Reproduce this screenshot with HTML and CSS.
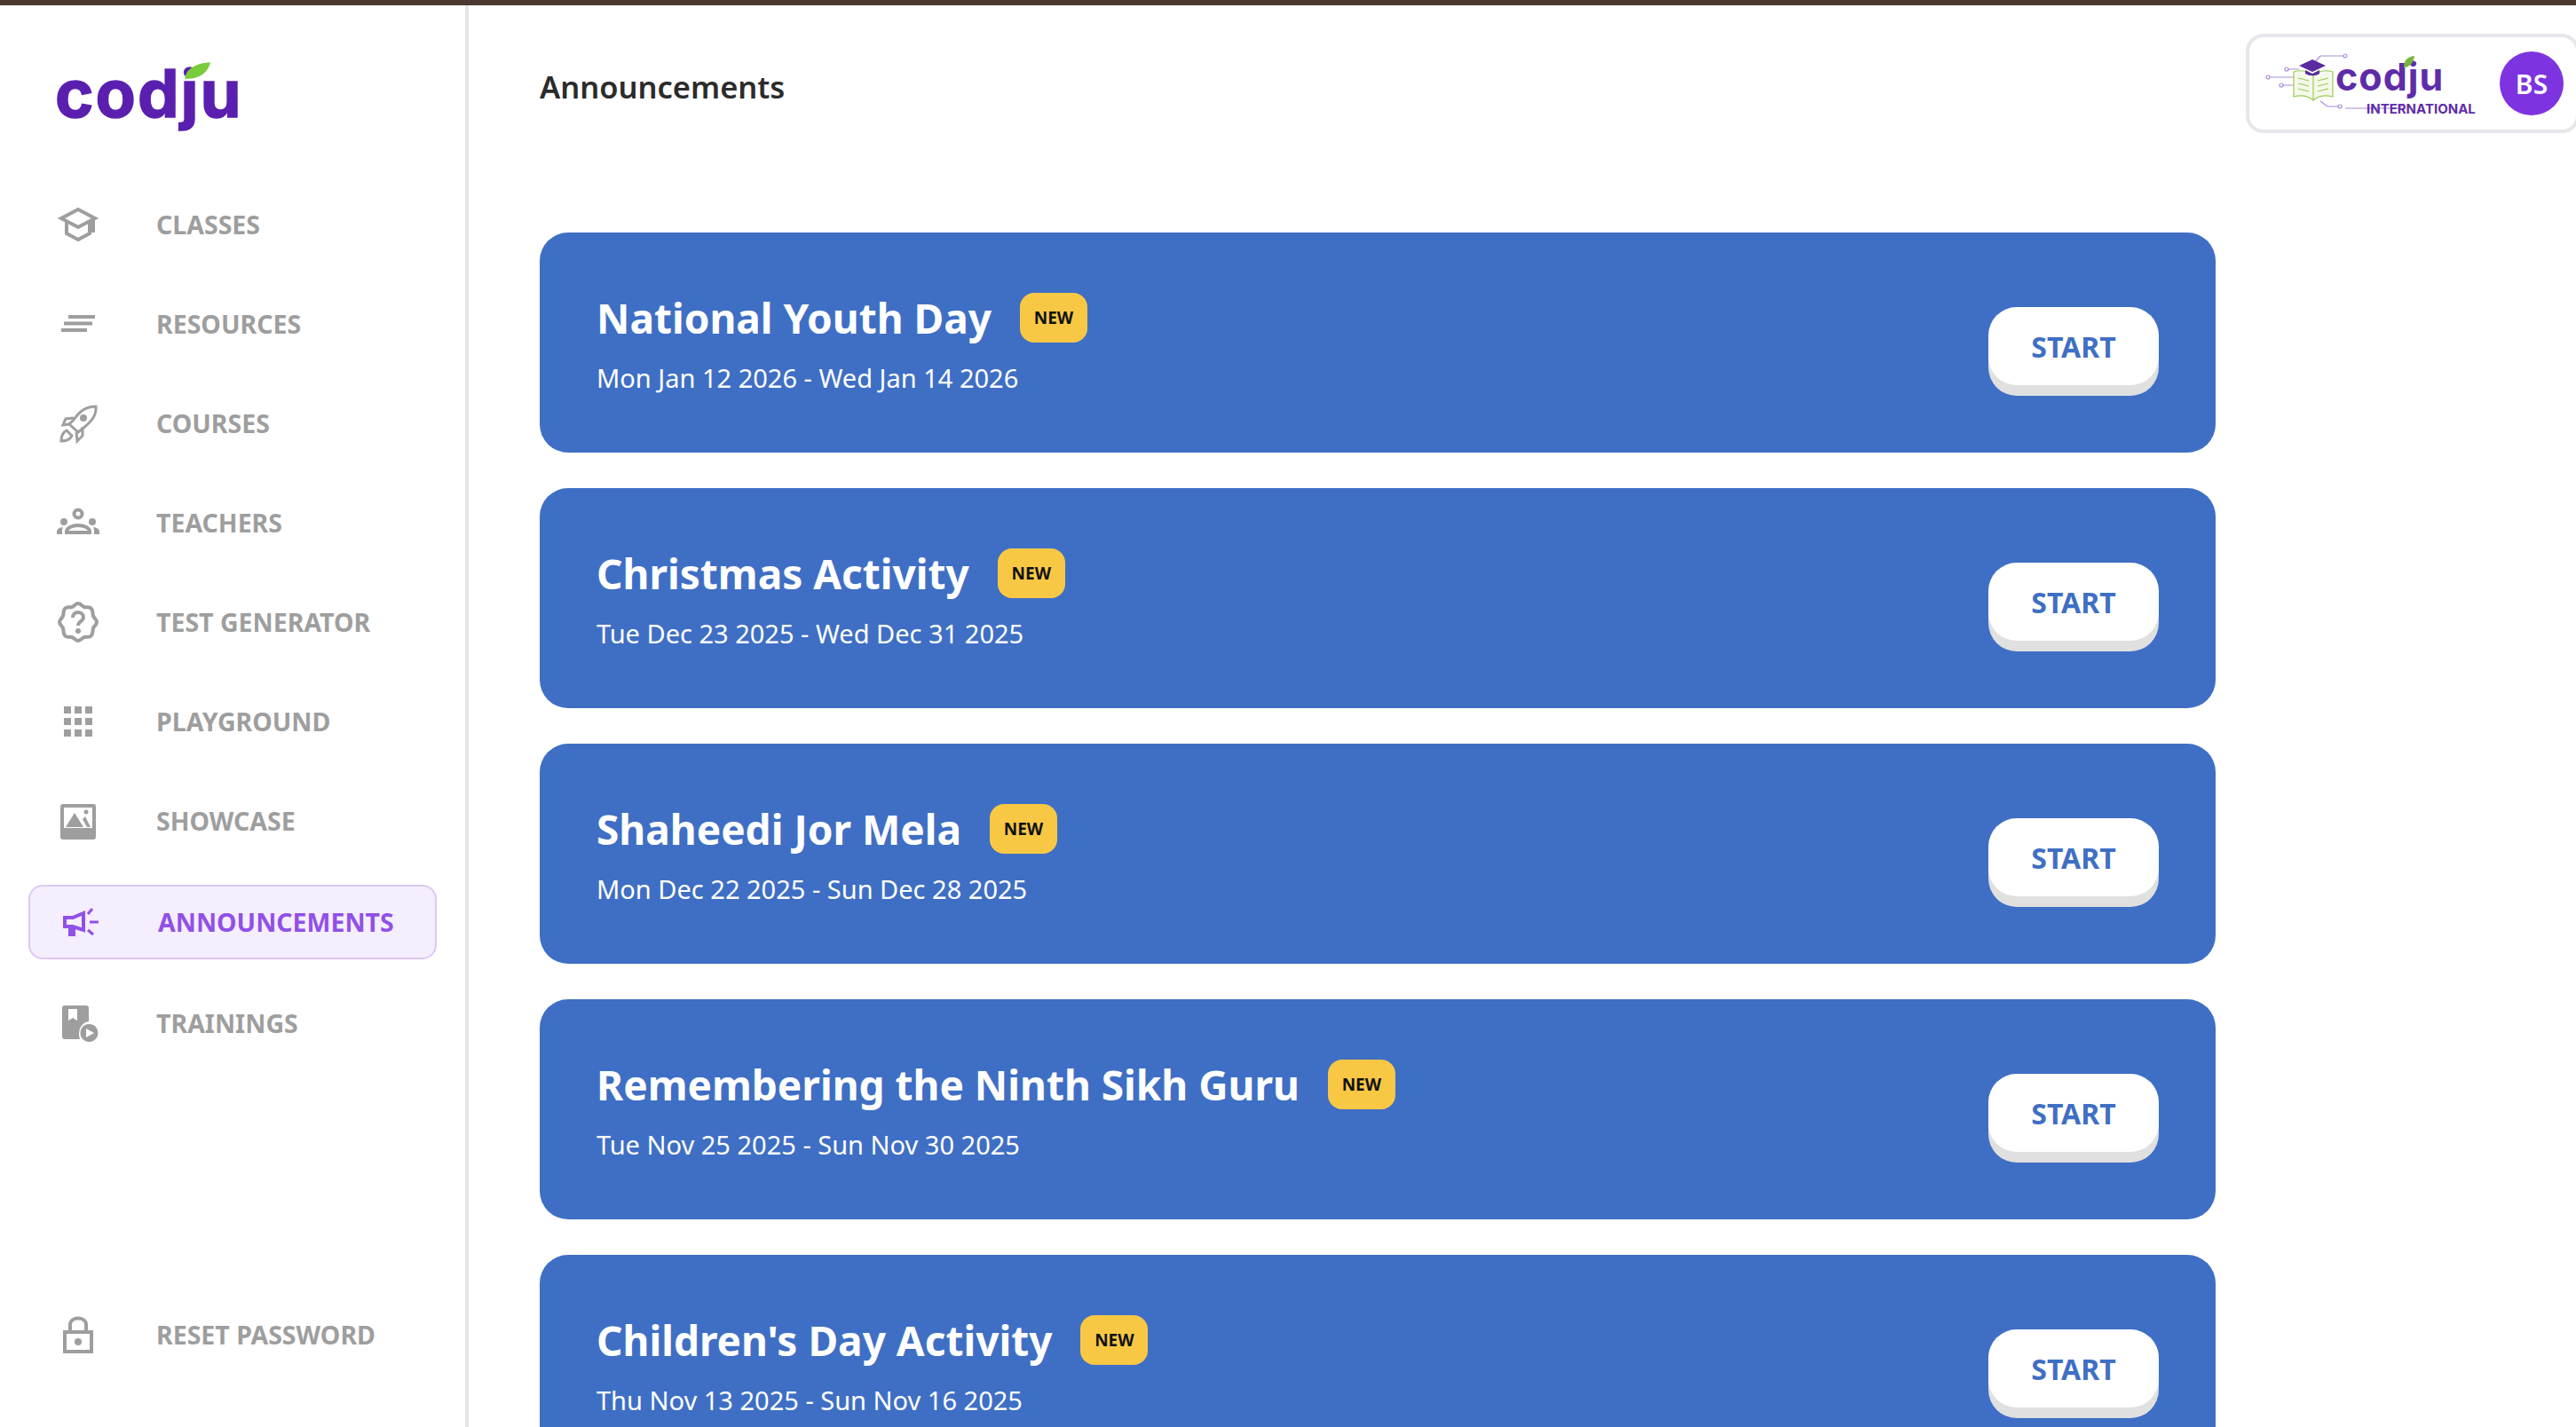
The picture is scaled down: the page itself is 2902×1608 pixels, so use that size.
FILE: index.html
```html
<!DOCTYPE html>
<html lang="en">
<head>
    <meta charset="UTF-8">
    <meta name="viewport" content="width=device-width, initial-scale=1.0">
    <title>Announcements</title>
    <link rel="stylesheet" href="styles.css">
</head>
<body>
    <div class="topbar"></div>
    <div class="layout">
        <aside class="sidebar">
            <div class="logo">
                <span class="logo-text">codju</span>
                <svg class="logo-leaf" viewBox="0 0 26 17"><path d="M1 16C2 8 9 1 26 0C24 9 16 17 1 16Z"/></svg>
            </div>
            <nav class="nav">
                <a class="nav-item">
                    <svg class="nav-icon" viewBox="0 0 48 48"><path class="line" d="M24 7L5 17L24 27L43 17L24 7Z M11 21V34L24 41L37 34V21"/><path class="line" d="M41 17V33"/></svg>
                    <span>CLASSES</span>
                </a>
                <a class="nav-item">
                    <svg class="nav-icon" viewBox="0 0 48 48"><path d="M13 14H43V18H13Z M8 21.500H40V25.500H8Z M5 29H34V33H5Z"/></svg>
                    <span>RESOURCES</span>
                </a>
                <a class="nav-item">
                    <svg class="nav-icon" viewBox="0 0 48 48"><path class="line thin" d="M44 5C33 5 26 10 19 20L14 25L24 34L29 30C39 22 45 15 44 5Z"/><circle cx="30" cy="18" r="4"/><path class="line thin" d="M19 18L10 19L7 26L14 25 M29 28L29 38L23 44L22 34 M11 32C7 34 5 39 5 44C10 44 15 42 17 38Z"/></svg>
                    <span>COURSES</span>
                </a>
                <a class="nav-item">
                    <svg class="nav-icon" viewBox="0 0 48 48"><circle class="line" cx="24" cy="14" r="4.500"/><circle cx="8" cy="23" r="4"/><circle cx="40" cy="23" r="4"/><path class="line" d="M11 37V34C11 30 17 27 24 27C31 27 37 30 37 34V35H11"/><path d="M0 37V34C0 31 3 29.500 7 29C6 31 6 33 6 37Z M48 37V34C48 31 45 29.500 41 29C42 31 42 33 42 37Z"/></svg>
                    <span>TEACHERS</span>
                </a>
                <a class="nav-item">
                    <svg class="nav-icon" viewBox="0 0 48 48"><path class="line" d="M24 3C27 3 28 6 31 7C34 8 37 6 39 9C41 11 40 14 41 17C42 20 45 21 45 24C45 27 42 28 41 31C40 34 41 37 39 39C37 42 34 40 31 41C28 42 27 45 24 45C21 45 20 42 17 41C14 40 11 42 9 39C7 37 8 34 7 31C6 28 3 27 3 24C3 21 6 20 7 17C8 14 7 11 9 9C11 6 14 8 17 7C20 6 21 3 24 3Z"/><path class="line" d="M18 19C18 15 21 13 24 13C28 13 30 16 30 19C30 23 24 23 24 28"/><circle cx="24" cy="34" r="3"/></svg>
                    <span>TEST GENERATOR</span>
                </a>
                <a class="nav-item">
                    <svg class="nav-icon" viewBox="0 0 48 48"><path d="M8 7H16V15H8Z M20 7H28V15H20Z M32 7H40V15H32Z M8 20H16V28H8Z M20 20H28V28H20Z M32 20H40V28H32Z M8 33H16V41H8Z M20 33H28V41H20Z M32 33H40V41H32Z"/></svg>
                    <span>PLAYGROUND</span>
                </a>
                <a class="nav-item">
                    <svg class="nav-icon" viewBox="0 0 48 48"><path fill-rule="evenodd" d="M7 5H41Q44 5 44 8V42Q44 45 41 45H7Q4 45 4 42V8Q4 5 7 5Z M8 9V32H40V9Z"/><path d="M10 31L20 15L30 31Z M29 22L32 19L38 31H34Z"/><circle cx="33" cy="14" r="2.500"/></svg>
                    <span>SHOWCASE</span>
                </a>
                <a class="nav-item active">
                    <svg class="nav-icon" viewBox="0 0 48 48"><path class="line" d="M28 14V33L16 29H7V19H16Z"/><path class="line" d="M13 29V38H17V30"/><path class="line thin" d="M33 15L38 9 M35 24H45 M33 33L39 38"/></svg>
                    <span>ANNOUNCEMENTS</span>
                </a>
                <a class="nav-item">
                    <svg class="nav-icon" viewBox="0 0 48 48"><path fill-rule="evenodd" d="M9 4H33Q36 4 36 7V22C27 23 23 33 26 42H9Q6 42 6 39V7Q6 4 9 4Z M13 8V21L18 18L23 21V8Z"/><path fill-rule="evenodd" d="M36.500 25A10 10 0 1 1 36.400 25Z M33 30V40L42 35Z"/></svg>
                    <span>TRAININGS</span>
                </a>
                <a class="nav-item reset">
                    <svg class="nav-icon" viewBox="0 0 48 48"><path class="line" d="M9 21H39V43H9Z"/><path class="line" d="M15 21V13C15 3 33 3 33 13V21"/><circle cx="24" cy="32" r="4"/></svg>
                    <span>RESET PASSWORD</span>
                </a>
            </nav>
        </aside>
        <main class="main">
            <header class="header">
                <h1 class="page-title">Announcements</h1>
                <div class="brand">
                    <svg class="brand-logo" viewBox="0 -3 250 78">
                        <g class="circuit">
                            <path d="M42 20H30 M8 29H38 M24 38H38 M58 14L66 5H94 M66 56L74 62H88 M94 64H155L160 59"/>
                            <circle cx="94" cy="5" r="2"/>
                            <circle cx="28" cy="20" r="2"/>
                            <circle cx="7" cy="29" r="2"/>
                            <circle cx="22" cy="38" r="2"/>
                            <circle cx="88" cy="62" r="2"/>
                        </g>
                        <path class="book" d="M58 27C50 21 42 21 36 23V51C44 49 52 50 58 55C64 50 72 49 80 51V23C74 21 66 21 58 27V55 M41 30L53 33 M41 36L53 39 M41 42L53 45 M75 30L63 33 M75 36L63 39 M75 42L63 45"/>
                        <path class="cap" d="M57 9L72 16L57 23L42 16Z M49 21V25C54 28 61 28 65 25V21L57 25Z"/>
                        <text class="brand-word" x="83" y="44">codju</text>
                        <text class="brand-sub" x="118" y="70">INTERNATIONAL</text>
                        <path class="leaf" d="M160 18C160 11 163 6 172 5C171 12 167 18 160 18Z"/>
                    </svg>
                    <div class="avatar">BS</div>
                </div>
            </header>
            <section class="cards">
                <article class="card">
                    <div class="card-info">
                        <div class="card-head"><h2 class="card-title">National Youth Day</h2><span class="badge">NEW</span></div>
                        <p class="card-date">Mon Jan 12 2026 - Wed Jan 14 2026</p>
                    </div>
                    <button class="start">START</button>
                </article>
                <article class="card">
                    <div class="card-info">
                        <div class="card-head"><h2 class="card-title">Christmas Activity</h2><span class="badge">NEW</span></div>
                        <p class="card-date">Tue Dec 23 2025 - Wed Dec 31 2025</p>
                    </div>
                    <button class="start">START</button>
                </article>
                <article class="card">
                    <div class="card-info">
                        <div class="card-head"><h2 class="card-title">Shaheedi Jor Mela</h2><span class="badge">NEW</span></div>
                        <p class="card-date">Mon Dec 22 2025 - Sun Dec 28 2025</p>
                    </div>
                    <button class="start">START</button>
                </article>
                <article class="card">
                    <div class="card-info">
                        <div class="card-head"><h2 class="card-title">Remembering the Ninth Sikh Guru</h2><span class="badge">NEW</span></div>
                        <p class="card-date">Tue Nov 25 2025 - Sun Nov 30 2025</p>
                    </div>
                    <button class="start">START</button>
                </article>
                <article class="card">
                    <div class="card-info">
                        <div class="card-head"><h2 class="card-title">Children's Day Activity</h2><span class="badge">NEW</span></div>
                        <p class="card-date">Thu Nov 13 2025 - Sun Nov 16 2025</p>
                    </div>
                    <button class="start">START</button>
                </article>
            </section>
        </main>
    </div>
</body>
</html>
```

FILE: styles.css
```css
* {
    box-sizing: border-box;
    margin: 0;
    padding: 0;
}
html, body {
    height: 100%;
    overflow: hidden;
}
body {
    font-family: "Noto Sans", "Open Sans", sans-serif;
    background-color: #fff;
    display: flex;
    flex-direction: column;
}
.topbar {
    height: 6px;
    flex: none;
    background-color: #4c3830;
}
.layout {
    flex: 1;
    display: flex;
    min-height: 0;
}
.sidebar {
    width: 528px;
    flex: none;
    border-right: 4px solid #e3e5e9;
    padding: 57px 32px 64px;
    display: flex;
    flex-direction: column;
}
.logo {
    position: relative;
    width: 210px;
    height: 84px;
    margin-left: 30px;
    flex: none;
}
.logo-text {
    font-family: Inter, sans-serif;
    font-size: 74px;
    font-weight: 700;
    line-height: 84px;
    letter-spacing: 2px;
    color: #5a1fae;
    -webkit-text-stroke: 1.500px #5a1fae;
}
.logo-leaf {
    position: absolute;
    left: 145px;
    top: 7px;
    width: 30px;
    height: 20px;
    fill: #78cb3b;
}
.nav {
    flex: 1;
    display: flex;
    flex-direction: column;
    gap: 32px;
    margin-top: 66px;
}
.nav-item {
    display: flex;
    align-items: center;
    gap: 64px;
    height: 80px;
    padding-left: 32px;
    font-size: 28.500px;
    font-weight: 700;
    color: #9e9e9e;
}
.nav-icon {
    width: 48px;
    height: 48px;
    flex: none;
    fill: #9e9e9e;
}
.line {
    fill: none;
    stroke: #9e9e9e;
    stroke-width: 4;
}
.line.thin {
    stroke-width: 3;
}
.active {
    height: 84px;
    padding-left: 32px;
    color: #9150e8;
    background-color: #f5eefe;
    border: 2px solid #dcc8f5;
    border-radius: 16px;
}
.active .line {
    stroke: #9150e8;
}
.reset {
    margin-top: auto;
}
.main {
    flex: 1;
    min-width: 0;
    padding-left: 80px;
}
.header {
    height: 256px;
    display: flex;
    justify-content: space-between;
    align-items: flex-start;
}
.page-title {
    font-size: 34.500px;
    font-weight: 600;
    line-height: 50px;
    margin-top: 67px;
    color: #2b2b2b;
}
.brand {
    width: 376px;
    height: 112px;
    margin-top: 32px;
    margin-right: -4px;
    display: flex;
    align-items: center;
    justify-content: space-between;
    padding: 0 14px 0 14px;
    border: 4px solid #e5e7eb;
    border-radius: 20px;
}
.brand-logo {
    width: 250px;
    height: 78px;
}
.circuit path, .circuit circle {
    fill: #fff;
    stroke: #a98bd8;
    stroke-width: 1.200;
}
.circuit path {
    fill: none;
}
.book {
    fill: #f4f9e9;
    stroke: #9ccb55;
    stroke-width: 1.200;
}
.cap {
    fill: #5a2ca0;
}
.leaf {
    fill: #78b53b;
}
.brand-word {
    font-family: Inter, sans-serif;
    font-size: 43px;
    font-weight: 700;
    letter-spacing: 1px;
    fill: #5f2ca8;
}
.brand-sub {
    font-family: Inter, sans-serif;
    font-size: 15px;
    font-weight: 700;
    fill: #5f2ca8;
}
.avatar {
    width: 72px;
    height: 72px;
    flex: none;
    border-radius: 50%;
    background-color: #7e33e0;
    color: #fff;
    font-size: 30px;
    font-weight: 600;
    display: flex;
    align-items: center;
    justify-content: center;
}
.cards {
    width: 1888px;
    display: flex;
    flex-direction: column;
    gap: 40px;
}
.card {
    height: 248px;
    flex: none;
    border-radius: 32px;
    background-color: #3f6fc4;
    color: #fff;
    padding: 0 64px;
    display: flex;
    align-items: center;
    justify-content: space-between;
}
.card-info {
    display: flex;
    flex-direction: column;
    gap: 16px;
}
.card-head {
    display: flex;
    align-items: center;
    gap: 32px;
}
.card-title {
    font-size: 46px;
    font-weight: 700;
    line-height: 64px;
}
.badge {
    width: 76px;
    height: 56px;
    border-radius: 16px;
    background-color: #f8c845;
    color: #111;
    font-size: 19px;
    font-weight: 700;
    display: flex;
    align-items: center;
    justify-content: center;
}
.card-date {
    font-size: 29px;
    line-height: 40px;
}
.start {
    width: 192px;
    height: 88px;
    margin-top: 8px;
    border: none;
    border-radius: 32px;
    background-color: #fff;
    box-shadow: 0 12px 0 #e0e0e0;
    color: #3f6fc4;
    font-family: inherit;
    font-size: 32px;
    font-weight: 700;
}
```
